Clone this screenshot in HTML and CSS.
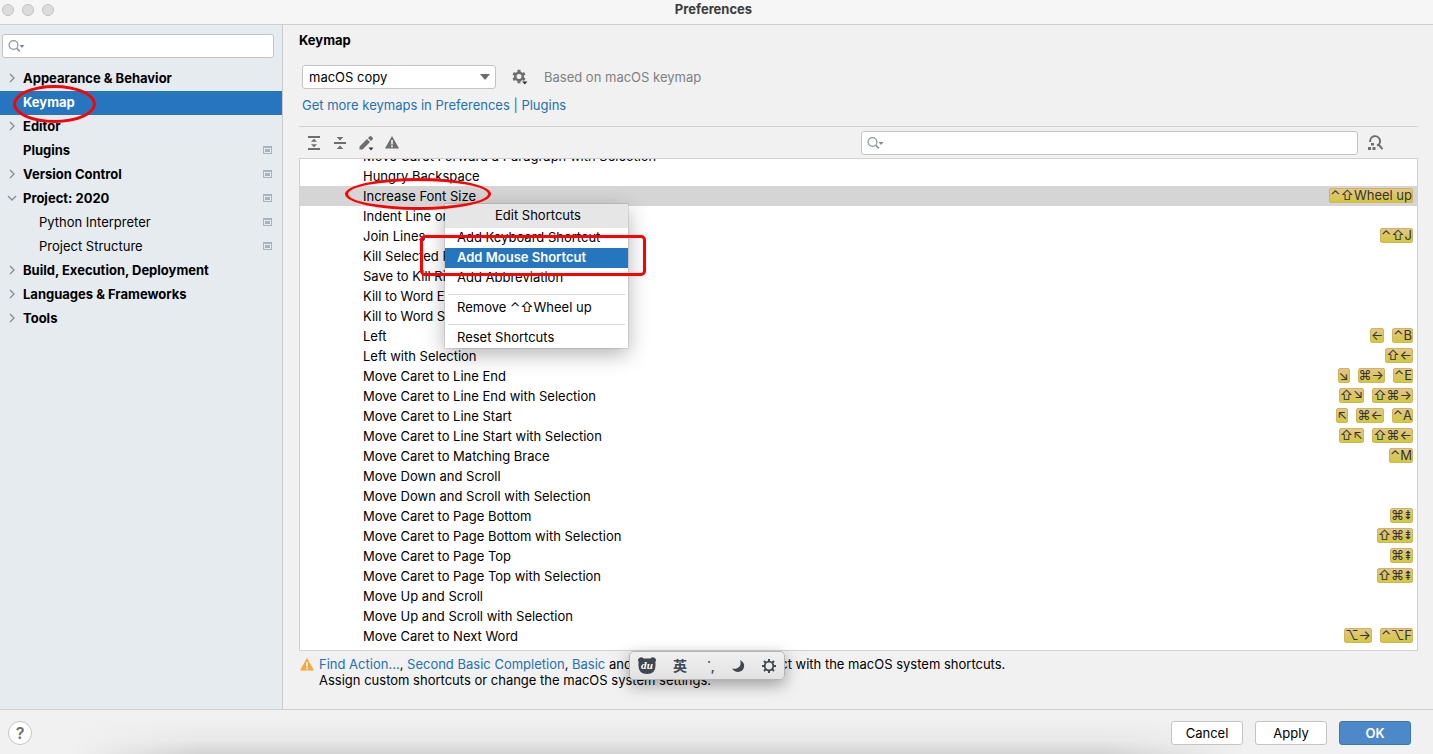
FILE: index.html
```html
<!DOCTYPE html>
<html lang="en">
<head>
  <meta charset="utf-8">
  <meta name="viewport" content="width=device-width">
  <title>Preferences</title>
  <link rel="stylesheet" href="styles.css">
</head>
<body>
  <svg class="defs" aria-hidden="true">
    <symbol id="right" viewBox="0 0 10 10"><path d="M3 1l4 4-4 4" fill="none" stroke="#8a8a8a" stroke-width="1.3"/></symbol>
    <symbol id="down" viewBox="0 0 10 10"><path d="M1 3l4 4 4-4" fill="none" stroke="#8a8a8a" stroke-width="1.3"/></symbol>
    <symbol id="proj" viewBox="0 0 9 8"><path d="M0 0h9v8H0zM1 2v5h7V2z" fill="#a7b4be" fill-rule="evenodd"/><path d="M2 3h5v3H2z" fill="#a7b4be"/></symbol>
    <symbol id="search" viewBox="0 0 17 12"><circle cx="5.5" cy="5" r="4.4" fill="none" stroke="#8a949b" stroke-width="1.2"/><path d="M8.7 8.2l3.1 3.2" stroke="#8a949b" stroke-width="1.6"/><path d="M11.5 5h5L14 8z" fill="#7f8b91"/></symbol>
    <symbol id="warn" viewBox="0 0 14 13"><path d="M7 0l7 12.5H0z" fill="currentColor"/><path d="M7 4v4.5M7 9.5v1.7" stroke="#f1f1f1" stroke-width="1.7"/></symbol>
  </svg>

  <header class="title">
    <i></i><i></i><i></i>
    <h1>Preferences</h1>
  </header>

  <div class="window">
    <aside>
      <label class="search">
        <svg width="17" height="12"><use href="#search"/></svg>
        <input type="text" aria-label="Search settings">
      </label>
      <nav>
        <a href="#"><svg class="arrow"><use href="#right"/></svg>Appearance &amp; Behavior</a>
        <a href="#" class="on">Keymap<span class="mark mark-nav"></span></a>
        <a href="#"><svg class="arrow"><use href="#right"/></svg>Editor</a>
        <a href="#">Plugins<svg class="proj"><use href="#proj"/></svg></a>
        <a href="#"><svg class="arrow"><use href="#right"/></svg>Version Control<svg class="proj"><use href="#proj"/></svg></a>
        <a href="#"><svg class="arrow"><use href="#down"/></svg>Project: 2020<svg class="proj"><use href="#proj"/></svg></a>
        <a href="#" class="sub">Python Interpreter<svg class="proj"><use href="#proj"/></svg></a>
        <a href="#" class="sub">Project Structure<svg class="proj"><use href="#proj"/></svg></a>
        <a href="#"><svg class="arrow"><use href="#right"/></svg>Build, Execution, Deployment</a>
        <a href="#"><svg class="arrow"><use href="#right"/></svg>Languages &amp; Frameworks</a>
        <a href="#"><svg class="arrow"><use href="#right"/></svg>Tools</a>
      </nav>
    </aside>

    <main>
      <h2>Keymap</h2>
      <div class="scheme">
        <div class="select">
          <select aria-label="Keymap scheme"><option>macOS copy</option></select>
          <svg width="10" height="6"><path d="M0 0h10L5 6z" fill="#6e6e6e"/></svg>
        </div>
        <button class="icon" aria-label="Scheme actions">
          <svg width="16" height="16" viewBox="0 0 16 16"><g fill="none" stroke="#6e6e6e"><circle cx="7" cy="7.500" r="3.800" stroke-width="2.600"/><path d="M7 .8v3M7 11.200v3M1.200 4.200l2.500 1.500M10.300 9.300l2.500 1.500M1.200 10.800l2.500-1.500M10.300 5.700l2.500-1.500" stroke-width="3"/></g><path d="M10 12.500h5.500l-2.700 3z" fill="#333"/></svg>
        </button>
        <span class="based">Based on macOS keymap</span>
      </div>
      <a href="#" class="more">Get more keymaps in Preferences | Plugins</a>

      <div class="toolbar">
        <button class="icon" aria-label="Expand all"><svg width="16" height="16" viewBox="0 0 16 16" fill="#6e6e6e"><path d="M2 1h12v2H2zM2 13h12v2H2zM8 3.800l3 3H5zM8 12.200l3-3H5z"/></svg></button>
        <button class="icon" aria-label="Collapse all"><svg width="16" height="16" viewBox="0 0 16 16" fill="#6e6e6e"><path d="M2 7h12v2H2zM8 5.500l3.300-3.500H4.700zM8 10.500l3.300 3.500H4.700z"/></svg></button>
        <button class="icon" aria-label="Edit shortcut"><svg width="16" height="16" viewBox="0 0 16 16" fill="#6e6e6e"><path d="M1.500 14.500v-3L9 4l3 3-7.500 7.500zM10 3l1.500-1.500q1-1 2 0l1 1q1 1 0 2L13 6z"/><path d="M10.500 12.500h5l-2.500 3z" fill="#333"/></svg></button>
        <button class="icon" aria-label="Show conflicts"><svg width="16" height="13"><use href="#warn"/></svg></button>
        <label class="search">
          <svg width="17" height="12"><use href="#search"/></svg>
          <input type="text" aria-label="Search actions">
        </label>
        <button class="icon find" aria-label="Find by shortcut"><svg width="16" height="16" viewBox="0 0 16 16"><path d="M2.300 7A4.900 4.900 0 1 1 9 10.600M10.500 9.500l4 4.700" fill="none" stroke="#6e6e6e" stroke-width="2"/><path d="M3 8h3v2.500H3zM0 12h3v3H0zM4.500 12h3v3h-3z" fill="#6e6e6e"/></svg></button>
      </div>

      <ul class="actions">
        <li>Move Caret Forward a Paragraph with Selection</li>
        <li>Hungry Backspace</li>
        <li class="on">Increase Font Size <kbd>⌃⇧Wheel up</kbd>
          <span class="mark mark-row"></span>
          <div class="menu">
            <h3>Edit Shortcuts</h3>
            <button>Add Keyboard Shortcut</button>
            <button class="hover">Add Mouse Shortcut</button>
            <button>Add Abbreviation</button>
            <hr>
            <button>Remove ⌃⇧Wheel up</button>
            <hr>
            <button>Reset Shortcuts</button>
            <span class="mark mark-menu"></span>
          </div>
        </li>
        <li>Indent Line or Selection</li>
        <li>Join Lines <kbd>⌃⇧J</kbd></li>
        <li>Kill Selected Region</li>
        <li>Save to Kill Ring</li>
        <li>Kill to Word End</li>
        <li>Kill to Word Start</li>
        <li>Left <kbd>←</kbd><kbd>⌃B</kbd></li>
        <li>Left with Selection <kbd>⇧←</kbd></li>
        <li>Move Caret to Line End <kbd>↘</kbd><kbd>⌘→</kbd><kbd>⌃E</kbd></li>
        <li>Move Caret to Line End with Selection <kbd>⇧↘</kbd><kbd>⇧⌘→</kbd></li>
        <li>Move Caret to Line Start <kbd>↖</kbd><kbd>⌘←</kbd><kbd>⌃A</kbd></li>
        <li>Move Caret to Line Start with Selection <kbd>⇧↖</kbd><kbd>⇧⌘←</kbd></li>
        <li>Move Caret to Matching Brace <kbd>⌃M</kbd></li>
        <li>Move Down and Scroll</li>
        <li>Move Down and Scroll with Selection</li>
        <li>Move Caret to Page Bottom <kbd>⌘⇟</kbd></li>
        <li>Move Caret to Page Bottom with Selection <kbd>⇧⌘⇟</kbd></li>
        <li>Move Caret to Page Top <kbd>⌘⇞</kbd></li>
        <li>Move Caret to Page Top with Selection <kbd>⇧⌘⇞</kbd></li>
        <li>Move Up and Scroll</li>
        <li>Move Up and Scroll with Selection</li>
        <li>Move Caret to Next Word <kbd>⌥→</kbd><kbd>⌃⌥F</kbd></li>
      </ul>

      <div class="notice">
        <svg width="14" height="13"><use href="#warn"/></svg>
        <p><a href="#">Find Action…</a>, <a href="#">Second Basic Completion</a>, <a href="#">Basic</a> and 11 more shortcuts conflict with the macOS system shortcuts.<br>Assign custom shortcuts or change the macOS system settings.</p>
        <div class="ime">
          <svg width="20" height="18" viewBox="0 0 18 18" preserveAspectRatio="none"><path d="M2 1q2-1.500 4 .5h6q2-2 4-.5 2 1.500.5 4 1.500 12-7.500 12T1.500 5Q0 2.500 2 1z" fill="#41474f"/><text x="9" y="12" text-anchor="middle">du</text></svg>
          <span class="lang">英</span>
          <span class="punct">˙,</span>
          <svg width="14" height="14" viewBox="0 0 14 14"><path d="M9 1q5 2.500 4 7C12 14 4 14.500 1 9.500 8 11 11 6 9 1z" fill="#41474f"/></svg>
          <svg width="16" height="16" viewBox="0 0 16 16" fill="none" stroke="#41474f"><circle cx="8" cy="8" r="4.300" stroke-width="1.800"/><path d="M8 1v2.500M8 12.500V15M1 8h2.500M12.500 8H15M3 3l2 2M11 11l2 2M3 13l2-2M11 5l2-2" stroke-width="2"/></svg>
        </div>
      </div>
    </main>
  </div>

  <footer>
    <button class="help" aria-label="Help">?</button>
    <button>Cancel</button>
    <button>Apply</button>
    <button class="ok">OK</button>
  </footer>
</body>
</html>
```
FILE: styles.css
```css
*{box-sizing:border-box}
body {
    margin: 0;
    min-height: 100vh;
    display: flex;
    flex-direction: column;
    background-color: #f1f1f1;
    color: #000;
    font: 13px/16px Inter, "Noto Sans CJK SC", sans-serif;
}
h1, h2, h3, p, ul {
    margin: 0;
    padding: 0;
    font-size: 13px;
}
a {
    color: #2470b3;
    text-decoration: none;
}
button, input, select {
    font: inherit;
    color: inherit;
}
svg {
    display: block;
    flex: none;
}
.defs {
    position: absolute;
    width: 0;
    height: 0;
}
.title {
    display: flex;
    gap: 8px;
    height: 25px;
    padding: 4px 2px;
    background-color: #f6f6f6;
    border-bottom: 1px solid #cfcfcf;
}
.title i {
    width: 12px;
    height: 12px;
    border: 1px solid #c2c2c2;
    border-radius: 50%;
    background-color: #dcdcdc;
}
.title h1 {
    flex: 1;
    margin-right: 66px;
    line-height: 10px;
    font-weight: 700;
    color: #3c3c3c;
    text-align: center;
}
.window {
    flex: 1;
    display: flex;
}

/* sidebar */
aside {
    flex: none;
    width: 283px;
    padding-top: 9px;
    background-color: #e6ebef;
    border-right: 1px solid #c9cccf;
}
.search {
    display: flex;
    align-items: center;
    height: 24px;
    padding-left: 5px;
    background-color: #fff;
    border: 1px solid #c4c4c4;
    border-radius: 3px;
}
.search input {
    flex: 1;
    min-width: 0;
    border: 0;
    outline: none;
    background: none;
}
aside .search {
    margin: 0 8px 9px 2px;
}
nav a {
    position: relative;
    display: flex;
    align-items: center;
    height: 24px;
    padding: 0 10px 2px 23px;
    color: #000;
    font-weight: 700;
}
nav .on {
    background-color: #2675bf;
    color: #fff;
}
nav .sub {
    padding-left: 39px;
    font-weight: 400;
}
.arrow {
    width: 10px;
    height: 10px;
    margin: 0 6px 0 -16px;
}
.proj {
    width: 9px;
    height: 8px;
    margin-left: auto;
}

/* keymap page */
main {
    flex: 1;
    min-width: 0;
    padding: 7px 15px 0 16px;
}
main h2 {
    line-height: 16px;
    font-weight: 700;
}
.scheme {
    display: flex;
    align-items: center;
    margin: 17px 0 0 3px;
}
.select {
    position: relative;
    width: 194px;
}
.select select {
    display: block;
    width: 100%;
    height: 24px;
    padding: 0 6px;
    appearance: none;
    background-color: #fff;
    border: 1px solid #c4c4c4;
    border-radius: 3px;
}
.select svg {
    position: absolute;
    right: 6px;
    top: 9px;
}
.icon {
    padding: 0;
    border: 0;
    background: none;
    color: #6e6e6e;
}
.scheme .icon {
    margin: 0 16px;
}
.based {
    color: #808080;
}
.more {
    display: block;
    margin: 8px 0 0 3px;
}
.toolbar {
    display: flex;
    align-items: center;
    gap: 10px;
    height: 32px;
    margin-top: 13px;
    padding-left: 7px;
    border-top: 1px solid #d1d1d1;
}
.toolbar .search {
    flex: 0 1 497px;
    margin-left: auto;
}
.toolbar .find {
    margin-right: 34px;
}
.actions {
    list-style: none;
    height: 493px;
    overflow: hidden;
    background-color: #fff;
    border: 1px solid #d1d1d1;
}
.actions li {
    position: relative;
    display: flex;
    align-items: center;
    gap: 8px;
    height: 20px;
    padding: 0 4px 1px 63px;
}
.actions li:first-child {
    margin-top: -13px;
}
.actions .on {
    background-color: #d5d5d5;
}
kbd {
    height: 15px;
    border: 1px solid #cfb65e;
    border-radius: 2px;
    background: linear-gradient(#e5c48b, #d1c93d);
    color: #333;
    font: 13px/13px Inter, "DejaVu Sans", sans-serif;
}
kbd:first-of-type {
    margin-left: auto;
}

/* popup */
.menu {
    position: absolute;
    left: 145px;
    top: 18px;
    z-index: 1;
    width: 183px;
    background-color: #fff;
    box-shadow: 0 0 1px rgba(0, 0, 0, 0.5), 0 6px 20px rgba(0, 0, 0, 0.3);
}
.menu h3 {
    height: 24px;
    padding-left: 3px;
    line-height: 22px;
    font-weight: 400;
    text-align: center;
    background-color: #e6e6e6;
}
.menu button {
    display: block;
    width: 100%;
    height: 20px;
    padding: 0 12px 2px;
    border: 0;
    background: none;
    text-align: left;
}
.menu .hover {
    background-color: #2675bf;
    color: #fff;
    font-weight: 600;
}
.menu hr {
    height: 1px;
    margin: 6px 3px 3px;
    border: 0;
    background-color: #d9d9d9;
}

/* red pen */
.mark {
    position: absolute;
    border: 3px solid #f00;
    border-radius: 50%;
    z-index: 2;
}
.mark-nav {
    left: 13px;
    top: -6px;
    width: 83px;
    height: 38px;
}
.mark-row {
    left: 45px;
    top: -8px;
    width: 146px;
    height: 32px;
}
.mark-menu {
    left: -25px;
    top: 31px;
    width: 226px;
    height: 41px;
    border-radius: 5px;
}

.notice {
    position: relative;
    display: flex;
    gap: 5px;
    padding: 5px 0 20px 1px;
}
.notice > svg {
    margin-top: 2px;
    color: #f2a83b;
}
.ime {
    position: absolute;
    left: 330px;
    top: 0;
    display: flex;
    align-items: center;
    justify-content: space-between;
    width: 156px;
    height: 29px;
    padding: 0 7px;
    border: 1px solid #b5b5b5;
    border-radius: 5px;
    background: linear-gradient(#f0f0f0, #e2e2e2);
    box-shadow: 0 5px 16px rgba(0, 0, 0, 0.35);
    color: #41474f;
}
.ime text {
    font: italic bold 10px "Liberation Serif", serif;
    fill: #fff;
}
.lang {
    padding-bottom: 2px;
    font: bold 14px/16px "Noto Sans CJK SC", sans-serif;
}
.punct {
    padding-left: 4px;
    font-weight: 600;
}

footer {
    display: flex;
    align-items: center;
    gap: 12px;
    height: 45px;
    padding: 2px 22px 0 8px;
    border-top: 1px solid #cfcfcf;
    background: linear-gradient(to right, #f1f1f1 70px, transparent 200px, transparent calc(100% - 330px), #f1f1f1 calc(100% - 190px)), linear-gradient(#f1f1f1 8px, #e8e8e8 30px, #d4d4d4);
}
footer button {
    width: 72px;
    height: 24px;
    padding: 0;
    border: 1px solid #c4c4c4;
    border-radius: 3px;
    background-color: #fff;
}
footer .ok {
    border-color: #3a78b8;
    background-color: #4d89c9;
    color: #fff;
    font-weight: 600;
}
footer .help {
    width: 24px;
    margin-right: auto;
    border-radius: 50%;
    color: #6e6e6e;
    font-size: 16px;
    font-weight: 600;
}
```
